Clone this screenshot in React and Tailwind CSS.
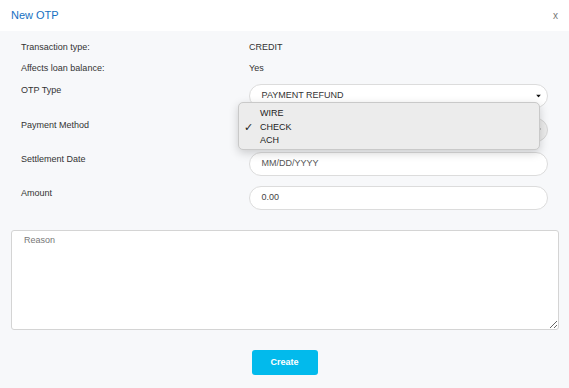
import React from "react";

const font = { fontFamily: '"Liberation Sans", Arial, sans-serif' };

function Arrow() {
  return (
    <svg width="5" height="3" viewBox="0 0 5 3" className="absolute right-[6px] top-1/2 -translate-y-1/2">
      <path d="M0 0h5L2.5 3z" fill="#111" />
    </svg>
  );
}

export default function App() {
  return (
    <div className="w-[569px] h-[388px] bg-[#f7f8fa] text-[#333] relative overflow-hidden" style={font}>
      <div className="h-[31px] bg-white flex items-center justify-between pl-[11px] pr-[11px]">
        <span className="text-[11px] text-[#1670c2]">New OTP</span>
        <span className="text-[10px] text-[#777]">x</span>
      </div>

      <div className="px-[21px] pt-[10px] text-[9px]">
        <div className="flex h-[14px] items-center">
          <div className="w-[228px]">Transaction type:</div>
          <div>CREDIT</div>
        </div>
        <div className="flex h-[14px] items-center mt-[7px]">
          <div className="w-[228px]">Affects loan balance:</div>
          <div>Yes</div>
        </div>

        <div className="flex items-start mt-[8px]">
          <div className="w-[228px] leading-[12px]">OTP Type</div>
          <div className="relative w-[300px] h-[24px] rounded-full border border-[#dcdcdc] bg-white flex items-center pl-[12px]">
            PAYMENT REFUND
            <Arrow />
          </div>
        </div>

        <div className="flex items-start mt-[10px]">
          <div className="w-[228px] leading-[14px]">Payment Method</div>
          <div className="relative w-[300px] h-[24px] rounded-full border border-[#d6d6d6] bg-[#ebebeb]">
            <Arrow />
          </div>
        </div>

        <div className="flex items-start mt-[10px]">
          <div className="w-[228px] leading-[14px]">Settlement Date</div>
          <div className="w-[300px] h-[24px] rounded-full border border-[#dcdcdc] bg-white flex items-center pl-[12px] text-[#555]">
            MM/DD/YYYY
          </div>
        </div>

        <div className="flex items-start mt-[10px]">
          <div className="w-[228px] leading-[14px]">Amount</div>
          <div className="w-[300px] h-[24px] rounded-full border border-[#dcdcdc] bg-white flex items-center pl-[12px] text-[#444]">
            0.00
          </div>
        </div>
      </div>

      <div className="px-[11px] mt-[20px]">
        <textarea
          placeholder="Reason"
          className="block w-[548px] h-[100px] rounded-[3px] border border-[#d4d4d4] bg-white pl-[12px] pt-[3px] text-[9px] placeholder:text-[#777] outline-none"
          style={font}
        />
      </div>

      <div className="flex justify-center mt-[20px]">
        <button className="w-[66px] h-[25px] rounded-[3px] bg-[#02baec] text-white text-[9px] font-bold" style={font}>
          Create
        </button>
      </div>

      <div className="absolute left-[238px] top-[102px] w-[302px] h-[48px] rounded-[5px] border border-[#c9c9c9] bg-[#ececec] shadow-[0_3px_10px_rgba(0,0,0,0.18)] pt-[4px] text-[9px] text-[#222]">
        <div className="h-[13.5px] leading-[13.5px] pl-[21px]">WIRE</div>
        <div className="h-[13.5px] leading-[13.5px] pl-[21px] relative">
          <span className="absolute left-[5px] top-0 text-[11px]">✓</span>
          CHECK
        </div>
        <div className="h-[13.5px] leading-[13.5px] pl-[21px]">ACH</div>
      </div>
    </div>
  );
}
